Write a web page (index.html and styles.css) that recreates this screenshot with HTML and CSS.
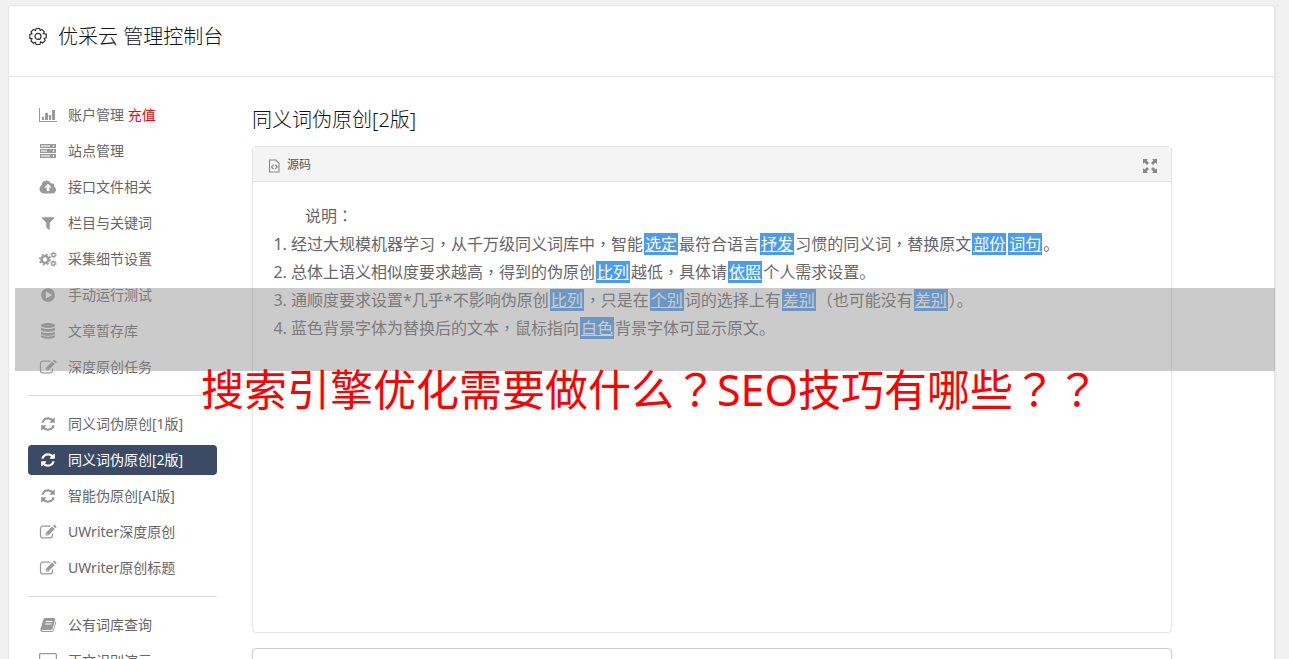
FILE: index.html
```html
<!DOCTYPE html>
<html lang="zh-CN">
<head>
    <meta charset="UTF-8">
    <meta name="viewport" content="width=device-width, initial-scale=1.0">
    <title>优采云 管理控制台</title>
    <link rel="stylesheet" href="styles.css">
</head>
<body>
<svg class="sprite" aria-hidden="true">
    <symbol id="i-chart" viewBox="0 0 20 16"><path d="M1 1h1v13h17v1H1zM4 10h2v3H4zM7 6h3v7H7zM11 8h2v5h-2zM14 3h3v10h-3z"/></symbol>
    <symbol id="i-server" viewBox="0 0 20 16"><path fill-opacity=".45" d="M2 1h10v4H2zM2 6h10v4H2zM2 11h10v4H2z"/><path fill-rule="evenodd" d="M2 1h16v4H2zM3 2v2h9V2zM2 6h16v4H2zM3 7v2h6V7zM2 11h16v4H2zM3 12v2h9v-2zM15 2h1v2h-1zM15 7h1v2h-1zM15 12h1v2h-1z"/></symbol>
    <symbol id="i-cloud" viewBox="0 0 20 16"><path fill-rule="evenodd" d="M5.500 14.500A4.500 4.500 0 0 1 3.500 6.300 5 5 0 0 1 13 4.500a2.500 2.500 0 0 1 3.200 3.200A3.700 3.700 0 0 1 15 14.500zM10 4.800 6.200 8.600h2.500V12h2.600V8.600h2.500z"/></symbol>
    <symbol id="i-filter" viewBox="0 0 1792 1792"><path d="M1595 295q17 41-14 70l-493 493v742q0 42-39 59-13 5-25 5-27 0-45-19l-256-256q-19-19-19-45v-486l-493-493q-31-29-14-70 17-39 59-39h1280q42 0 59 39z"/></symbol>
    <symbol id="i-cogs" viewBox="0 0 20 16"><g fill="none" stroke="currentColor"><circle cx="7" cy="8.500" r="3.400" stroke-width="2.400"/><circle cx="7" cy="8.500" r="5.200" stroke-width="1.600" stroke-dasharray="2.050 2.034"/><circle cx="15.500" cy="4" r="1.700" stroke-width="1.400"/><circle cx="15.500" cy="4" r="2.700" stroke-width="1" stroke-dasharray="1.400 1.430"/><circle cx="15.500" cy="12.500" r="1.700" stroke-width="1.400"/><circle cx="15.500" cy="12.500" r="2.700" stroke-width="1" stroke-dasharray="1.400 1.430"/></g></symbol>
    <symbol id="i-play" viewBox="0 0 1792 1792"><path d="M896 128q209 0 385.500 103t279.500 279.500 103 385.500-103 385.500-279.500 279.500-385.500 103-385.500-103-279.500-279.500-103-385.500 103-385.500 279.500-279.500 385.500-103zm384 823q32-18 32-55t-32-55l-544-320q-31-19-64-1-32 19-32 56v640q0 37 32 56 16 8 32 8 17 0 32-9z"/></symbol>
    <symbol id="i-db" viewBox="0 0 16 16"><ellipse cx="8" cy="2.500" rx="7" ry="2.500"/><path d="M1 4.500c2 2 12 2 14 0v2c0 3-14 3-14 0zM1 8.500c2 2 12 2 14 0v2c0 3-14 3-14 0zM1 12c2 2 12 2 14 0v1.500c0 3-14 3-14 0z"/></symbol>
    <symbol id="i-edit" viewBox="0 0 20 16"><path d="M12.500 2.200H4.800a2.300 2.300 0 0 0-2.300 2.300v7a2.300 2.300 0 0 0 2.300 2.300h7.400a2.300 2.300 0 0 0 2.300-2.300V9.500" fill="none" stroke="currentColor" stroke-width="1.200"/><path fill-rule="evenodd" d="M14.200 2.500 16.700 5 10.200 11.500H7.700V9zM15 1.700l.8-.8q.5-.4 1 0l1.500 1.500q.5.500 0 1l-.8.800zM8.700 9.300v1.200h1.200z"/></symbol>
    <symbol id="i-refresh" viewBox="0 0 1792 1792"><path d="M1639 1056q0 5-1 7-64 268-268 434.500t-478 166.500q-146 0-282.500-55t-243.500-157l-129 129q-19 19-45 19t-45-19-19-45v-448q0-26 19-45t45-19h448q26 0 45 19t19 45-19 45l-137 137q71 66 161 102t187 36q134 0 250-65t186-179q11-17 53-117 8-23 30-23h192q13 0 22.500 9.500t9.500 22.500zm25-800v448q0 26-19 45t-45 19h-448q-26 0-45-19t-19-45 19-45l138-138q-148-137-349-137-134 0-250 65t-186 179q-11 17-53 117-8 23-30 23h-199q-13 0-22.500-9.500t-9.500-22.500v-7q65-268 270-434.500t480-166.500q146 0 284 55.500t245 156.500l130-129q19-19 45-19t45 19 19 45z"/></symbol>
    <symbol id="i-book" viewBox="0 0 20 16"><path fill-rule="evenodd" d="M7 1h9.200q1.300.2 1 1.500L14.500 12q-.4 1-1.500 1H5q-1 0-1 .5t1 .5h9q.7 0 1-.8L17.700 4q.8.500.5 1.500L15.500 14q-.4 1-1.500 1H4.500Q2 15 2.500 12L5.300 2.500Q5.700 1 7 1zM8 4l-.3 1h6.500l.3-1zM7.400 6.500l-.3 1h6.500l.3-1z"/></symbol>
    <symbol id="i-laptop" viewBox="0 0 20 16"><path fill="none" stroke="currentColor" stroke-width="1.200" d="M1.600 12V1.600q0-1 1-1h14.800q1 0 1 1V12z"/><path d="M0 13h20v1q0 1-2 1H2q-2 0-2-1z"/></symbol>
    <symbol id="i-gear" viewBox="0 0 20 20"><g fill="none" stroke="currentColor" stroke-width="1.200"><path d="M8.300 1.500h3.400l.5 1.900 1.700-1 2.400 2.400-1 1.700 2.900.6v3.800l-2 .5 1 2-2.500 2.500-2-1-.8 2.600H8.100l-.7-2.200-2 .9L3 13.800l1-2-2.200-.6V7.500l2.200-.7-1-2 2.400-2.400 2 1z"/><circle cx="10" cy="9.400" r="3"/></g></symbol>
    <symbol id="i-source" viewBox="0 0 12 15"><path fill="none" stroke="currentColor" stroke-width="1.200" d="M.6 1h6.900l3.400 3.500V14H.6z"/><path fill="none" stroke="currentColor" stroke-width="1.300" d="M5 6 2.800 8.500 5 11M6.800 6 9 8.500 6.800 11"/></symbol>
    <symbol id="i-expand" viewBox="0 0 14 14"><path d="M0 0h5L3.600 1.500 6 4 4 6 1.500 3.600 0 5zM14 0v5l-1.500-1.400L10 6 8 4l2.400-2.500L9 0zM0 14V9l1.500 1.400L4 8l2 2-2.400 2.500L5 14zM14 14H9l1.400-1.500L8 10l2-2 2.500 2.400L14 9z"/></symbol>
</svg>

<div class="panel">
    <header class="panel-head">
        <svg class="gear"><use href="#i-gear"/></svg>
        <h1>优采云 管理控制台</h1>
    </header>
    <div class="panel-body">
        <nav class="sidebar">
            <a href="#"><svg><use href="#i-chart"/></svg><span>账户管理 <em>充值</em></span></a>
            <a href="#"><svg><use href="#i-server"/></svg>站点管理</a>
            <a href="#"><svg><use href="#i-cloud"/></svg>接口文件相关</a>
            <a href="#"><svg><use href="#i-filter"/></svg>栏目与关键词</a>
            <a href="#"><svg><use href="#i-cogs"/></svg>采集细节设置</a>
            <a href="#"><svg><use href="#i-play"/></svg>手动运行测试</a>
            <a href="#"><svg><use href="#i-db"/></svg>文章暂存库</a>
            <a href="#"><svg><use href="#i-edit"/></svg>深度原创任务</a>
            <hr>
            <a href="#"><svg><use href="#i-refresh"/></svg>同义词伪原创[1版]</a>
            <a href="#" class="active"><svg><use href="#i-refresh"/></svg>同义词伪原创[2版]</a>
            <a href="#"><svg><use href="#i-refresh"/></svg>智能伪原创[AI版]</a>
            <a href="#"><svg><use href="#i-edit"/></svg>UWriter深度原创</a>
            <a href="#"><svg><use href="#i-edit"/></svg>UWriter原创标题</a>
            <hr>
            <a href="#"><svg><use href="#i-book"/></svg>公有词库查询</a>
            <a href="#"><svg><use href="#i-laptop"/></svg>正文识别演示</a>
        </nav>
        <main class="content">
            <h2>同义词伪原创[2版]</h2>
            <section class="editor">
                <div class="toolbar">
                    <button type="button"><svg class="source"><use href="#i-source"/></svg>源码</button>
                    <button type="button" aria-label="最大化"><svg class="expand"><use href="#i-expand"/></svg></button>
                </div>
                <div class="editor-body">
                    <p>说明<span class="mid" lang="zh-TW">：</span></p>
                    <ol>
                        <li>经过大规模机器学习<span class="mid" lang="zh-TW">，</span>从千万级同义词库中<span class="mid" lang="zh-TW">，</span>智能<mark>选定</mark>最符合语言<mark>抒发</mark>习惯的同义词<span class="mid" lang="zh-TW">，</span>替换原文<mark>部份</mark><mark>词句</mark>。</li>
                        <li>总体上语义相似度要求越高<span class="mid" lang="zh-TW">，</span>得到的伪原创<mark>比列</mark>越低<span class="mid" lang="zh-TW">，</span>具体请<mark>依照</mark>个人需求设置。</li>
                        <li>通顺度要求设置*几乎*不影响伪原创<mark>比列</mark><span class="mid" lang="zh-TW">，</span>只是在<mark>个别</mark>词的选择上有<mark>差别</mark><span class="mid" lang="zh-TW">（</span>也可能没有<mark>差别</mark><span class="mid" lang="zh-TW">）</span>。</li>
                        <li>蓝色背景字体为替换后的文本<span class="mid" lang="zh-TW">，</span>鼠标指向<mark>白色</mark>背景字体可显示原文。</li>
                    </ol>
                </div>
            </section>
            <textarea class="result" aria-label="结果"></textarea>
        </main>
    </div>
</div>

<div class="banner">
    <div class="shade"></div>
    <div class="caption">搜索引擎优化需要做什么<span class="mid" lang="zh-TW">？</span>SEO技巧有哪些<span class="mid" lang="zh-TW">？？</span></div>
</div>
</body>
</html>
```
FILE: styles.css
```css
* {
    box-sizing: border-box;
}

body {
    margin: 0;
    padding: 5px 13px 0 8px;
    height: 100vh;
    overflow: hidden;
    background: #f1f1f1;
    color: #666;
    font: 14px/30px "Noto Sans", "Noto Sans CJK SC", sans-serif;
}

.sprite {
    display: none;
}

svg {
    fill: currentColor;
    flex: none;
}

h1, h2 {
    margin: 0;
    font-size: 20px;
    font-weight: 300;
    color: #111;
}

/* punctuation centred in its cell */
.mid {
    font-family: "Noto Sans CJK TC", sans-serif;
    line-height: 0;
}

.panel {
    background: #fff;
    border: 1px solid #e5e5e5;
    border-right-width: 2px;
    border-radius: 4px 4px 0 0;
}

.panel-head {
    display: flex;
    align-items: center;
    gap: 10px;
    height: 71px;
    padding: 0 19px 9px;
    border-bottom: 1px solid #e5e5e5;
}

.gear {
    width: 20px;
    height: 20px;
    color: #333;
}

.panel-body {
    display: flex;
    gap: 35px;
    padding: 23px 19px;
}

.sidebar {
    flex: 0 0 189px;
}

.sidebar a {
    display: flex;
    align-items: center;
    gap: 10px;
    height: 30px;
    margin-bottom: 6px;
    padding: 0 10px;
    border-radius: 4px;
    color: #666;
    text-decoration: none;
}

.sidebar svg {
    width: 20px;
    height: 16px;
    color: #999;
}

.sidebar em {
    color: #f00;
    font-style: normal;
}

.sidebar a.active {
    background: #3b4b66;
}

.sidebar a.active,
.sidebar a.active svg {
    color: #fff;
}

.sidebar hr {
    margin: 13px 0;
    border: 0;
    border-top: 1px solid #ddd;
}

.content {
    flex: 1;
    max-width: 920px;
    padding-top: 5px;
}

.content h2 {
    margin-bottom: 11px;
}

.editor {
    border: 1px solid #e5e5e5;
    border-radius: 4px;
}

.toolbar {
    display: flex;
    justify-content: space-between;
    height: 35px;
    padding: 2px 14px 0 16px;
    background: #f4f4f4;
    border-bottom: 1px solid #e5e5e5;
}

.toolbar button {
    display: flex;
    align-items: center;
    gap: 7px;
    padding: 0;
    border: 0;
    background: none;
    color: #555;
    font: inherit;
    font-size: 12px;
}

.toolbar svg {
    margin-top: 2px;
    color: #888;
}

.source {
    width: 11px;
    height: 14px;
}

.expand {
    width: 14px;
    height: 14px;
}

.editor-body {
    min-height: 450px;
    padding: 20px;
    font-size: 16px;
    line-height: 28px;
}

.editor-body p {
    margin: 0;
    text-indent: 32px;
}

.editor-body ol {
    margin: 0;
    padding-left: 18px;
}

mark {
    margin: 0 1px;
    padding: 0 1px;
    background: #4a9cf3;
    color: #fff;
    text-decoration: underline;
}

.result {
    display: block;
    width: 100%;
    height: 120px;
    margin-top: 15px;
    border: 1px solid #ccc;
    border-radius: 4px;
    resize: none;
}

/* caption strip laid over the page */
.banner {
    position: absolute;
    top: 288px;
    left: 15px;
    right: 14px;
}

.shade {
    height: 83px;
    background: rgba(147, 147, 147, 0.48);
}

.caption {
    padding-left: 10px;
    color: #f00;
    font-size: 43px;
    line-height: 38px;
    text-align: center;
    white-space: nowrap;
}
```
